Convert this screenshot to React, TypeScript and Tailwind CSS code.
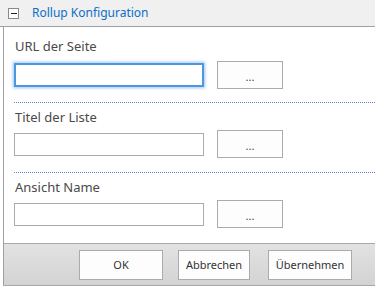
import React from "react";

const font = { fontFamily: '"Segoe UI", "Noto Sans", "Liberation Sans", sans-serif' };

function Row({ focused }: { focused?: boolean }) {
  return (
    <div className="flex items-center ml-[10px] h-[28px]">
      <div
        className={
          focused
            ? "w-[190px] h-[24px] bg-white border-2 border-[#4b97e0] shadow-[0_0_3px_1px_rgba(80,150,230,0.55)]"
            : "w-[190px] h-[23px] bg-white border border-[#ababab]"
        }
      />
      <button className="ml-[13px] w-[66px] h-[28px] bg-[#fdfdfd] border border-[#ababab] text-[11px] text-[#444] leading-none pt-[2px]">
        ...
      </button>
    </div>
  );
}

function Label({ text }: { text: string }) {
  return <div className="ml-[11px] text-[13px] leading-[18px] text-[#4a4a4a]">{text}</div>;
}

function Dots() {
  return <div className="ml-[10px] h-0 border-t border-dotted border-[#5f86d4]" />;
}

export default function App() {
  return (
    <div className="w-[375px] h-[289px] bg-white overflow-hidden" style={font}>
      <div className="h-[27px] bg-[#f0f0f0] border-b border-[#a0a0a0] flex items-center">
        <div className="ml-[8px] w-[11px] h-[11px] border border-[#8a8a8a] bg-white flex items-center justify-center">
          <div className="w-[6px] h-[1px] bg-[#222]" />
        </div>
        <span className="ml-[13px] text-[12px] text-[#0b6fc7]">Rollup Konfiguration</span>
      </div>
      <div className="ml-[3px] border-l border-[#a0a0a0] h-[259px] flex flex-col">
        <div className="h-[216px] flex flex-col">
          <div className="pt-[10px]">
            <Label text="URL der Seite" />
            <div className="mt-[6px]" />
            <Row focused />
            <div className="h-[13px]" />
          </div>
          <Dots />
          <div className="pt-[5px]">
            <Label text="Titel der Liste" />
            <div className="mt-[4px]" />
            <Row />
            <div className="h-[14px]" />
          </div>
          <Dots />
          <div className="pt-[5px]">
            <Label text="Ansicht Name" />
            <div className="mt-[4px]" />
            <Row />
          </div>
        </div>
        <div className="h-[43px] border-t border-b border-[#a8a8a8] bg-[linear-gradient(#e2e2e2,#d3d3d3)] flex items-start justify-end pt-[6px] pr-[23px]">
          <button className="w-[84px] h-[30px] bg-[#fdfdfd] border border-[#ababab] text-[11px] text-[#333]">OK</button>
          <button className="ml-[15px] w-[72px] h-[30px] bg-[#fdfdfd] border border-[#ababab] text-[11px] text-[#333]">Abbrechen</button>
          <button className="ml-[18px] w-[84px] h-[30px] bg-[#fdfdfd] border border-[#ababab] text-[11px] text-[#333]">Übernehmen</button>
        </div>
      </div>
    </div>
  );
}
